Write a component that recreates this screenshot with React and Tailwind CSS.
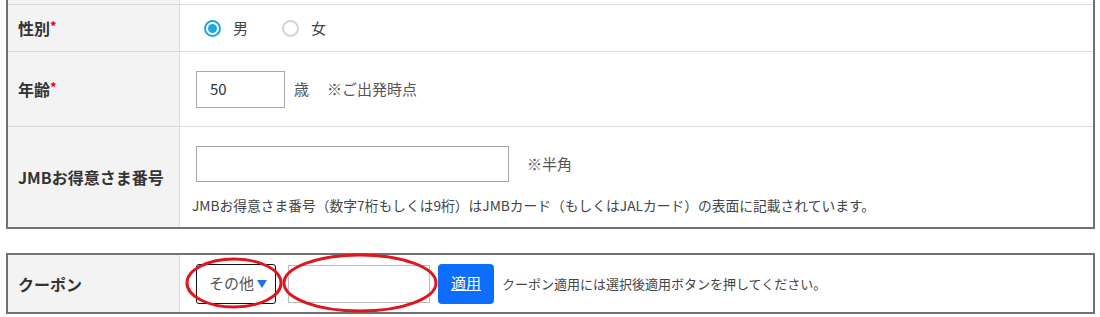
import React from "react";

const font = { fontFamily: '"Noto Sans CJK JP", "Noto Sans", sans-serif' };

const Star = () => <span className="text-[#e60012] text-[13px] align-top">*</span>;

// one row of the form table
const Row = ({ label, height, children, last }) => (
  <div className={`flex ${last ? "" : "border-b border-[#dcdcdc]"} ${height}`}>
    <div className="w-[172px] shrink-0 bg-[#f3f3f3] border-r border-[#dcdcdc] flex items-center pl-[10px] text-[16px] font-bold text-[#333]">
      {label}
    </div>
    <div className="flex-1 bg-white">{children}</div>
  </div>
);

const Radio = ({ checked, label }) => (
  <label className="flex items-center gap-[12px] text-[15px] text-[#444]">
    {checked ? (
      <span className="w-[17px] h-[17px] rounded-full border-2 border-[#1fa8e0] flex items-center justify-center">
        <span className="w-[9px] h-[9px] rounded-full bg-[#1fa8e0]" />
      </span>
    ) : (
      <span className="w-[17px] h-[17px] rounded-full border-2 border-[#d4d4d4]" />
    )}
    {label}
  </label>
);

export default function App() {
  return (
    <div className="w-[1100px] h-[317px] bg-white overflow-hidden" style={font}>
      {/* main table, its top row is cut off by the frame */}
      <div className="ml-[6px] w-[1089px] border-x-2 border-b-2 border-[#727272]">
        <Row label="" height="h-[5px]" />
        <Row
          label={
            <span>
              性別
              <Star />
            </span>
          }
          height="h-[47px]"
        >
          <div className="h-full flex items-center pl-[24px] gap-[34px]">
            <Radio checked label="男" />
            <Radio label="女" />
          </div>
        </Row>
        <Row
          label={
            <span>
              年齢
              <Star />
            </span>
          }
          height="h-[75px]"
        >
          <div className="h-full flex items-center pl-[16px] text-[15px] text-[#555]">
            <div className="w-[89px] h-[37px] border border-[#a8a8a8] flex items-center pl-[13px] text-[#333]">
              50
            </div>
            <span className="ml-[9px]">歳</span>
            <span className="ml-[18px]">※ご出発時点</span>
          </div>
        </Row>
        <Row label="JMBお得意さま番号" height="h-[100px]" last>
          <div className="h-full flex flex-col pl-[12px] pt-[19px]">
            <div className="flex items-center pl-[4px]">
              <div className="w-[313px] h-[36px] border border-[#a8a8a8] bg-white" />
              <span className="ml-[18px] text-[15px] text-[#555]">※半角</span>
            </div>
            <p className="mt-[17px] text-[13.75px] text-[#444] leading-none">
              JMBお得意さま番号（数字7桁もしくは9桁）はJMBカード（もしくはJALカード）の表面に記載されています。
            </p>
          </div>
        </Row>
      </div>

      {/* coupon table */}
      <div className="relative mt-[24px] ml-[6px] w-[1089px] border-2 border-[#727272]">
        <Row label="クーポン" height="h-[57px]" last>
          <div className="h-full flex items-center pl-[16px]">
            <div className="w-[80px] h-[40px] border border-[#111] rounded-[3px] flex items-center justify-between pl-[12px] pr-[8px] text-[15px] text-[#555]">
              その他
              <svg width="10" height="8" viewBox="0 0 10 8">
                <path d="M0 0 H10 L5 8 Z" fill="#1a73e8" />
              </svg>
            </div>
            <div className="ml-[12px] w-[142px] h-[38px] border border-[#bdbdbd] bg-white" />
            <button className="ml-[8px] w-[56px] h-[40px] rounded-[4px] bg-[#0d6efd] text-white text-[15px] underline">
              適用
            </button>
            <span className="ml-[8px] text-[13px] text-[#444]">
              クーポン適用には選択後適用ボタンを押してください。
            </span>
          </div>
        </Row>

        {/* red annotation marks */}
        <svg
          className="absolute left-[-8px] top-[-2px] pointer-events-none"
          width="1100"
          height="64"
          viewBox="0 0 1100 64"
        >
          <ellipse cx="234" cy="30" rx="47" ry="24" fill="none" stroke="#e0161e" strokeWidth="3" />
          <ellipse cx="360" cy="30" rx="76" ry="28" fill="none" stroke="#e0161e" strokeWidth="3" />
        </svg>
      </div>
    </div>
  );
}
